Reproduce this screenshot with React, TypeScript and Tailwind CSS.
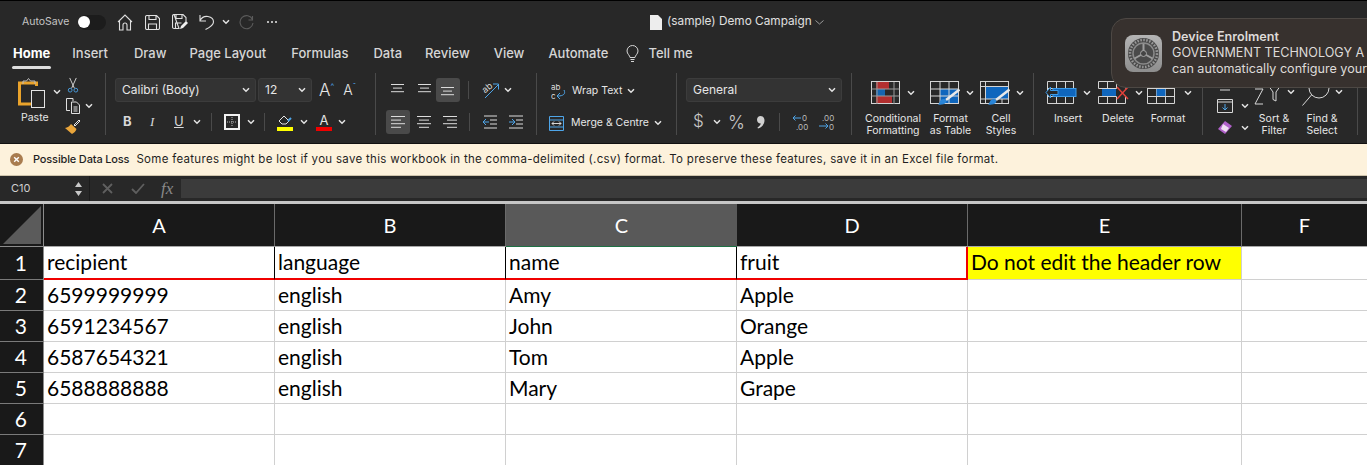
import React from "react";

const Chev = ({ className = "" }: { className?: string }) => (
  <svg width="8" height="6" viewBox="0 0 8 6" className={"shrink-0 " + className} fill="none" stroke="#e4e4e4" strokeWidth="1.5">
    <path d="M1 1.2l3 3 3-3" />
  </svg>
);

const Lines = ({ kind }: { kind: string }) => {
  const xs: Record<string, [number, number][]> = {
    top: [[1, 14], [3, 12], [1, 14]],
    left: [[1, 15], [1, 11], [1, 15], [1, 11]],
    center: [[1, 15], [3, 13], [1, 15], [3, 13]],
    right: [[1, 15], [5, 15], [1, 15], [5, 15]],
  };
  return (
    <svg width="16" height="14" viewBox="0 0 16 14" stroke="#dcdcdc" strokeWidth="1">
      {xs[kind].map((p, i) => (
        <line key={i} x1={p[0]} x2={p[1]} y1={1.5 + i * 3.6} y2={1.5 + i * 3.6} />
      ))}
    </svg>
  );
};

const TableIcon = ({ variant }: { variant: string }) => (
  <svg width="30" height="24" viewBox="0 0 30 24" fill="none">
    {variant === "cond" && (
      <>
        <rect x="5" y="1" width="13" height="7" fill="#b22f2f" />
        <rect x="5" y="8" width="9" height="7" fill="#1565b0" />
        <rect x="5" y="15" width="16" height="7" fill="#b22f2f" />
      </>
    )}
    {variant === "fmt" && <rect x="10" y="8" width="18" height="15" fill="#0f66bd" />}
    {variant === "cell" && <rect x="5" y="6" width="23" height="12" fill="#0f66bd" />}
    <g stroke="#d4d4d4" strokeWidth="1">
      <rect x="0.5" y="0.5" width="28" height="22" />
      {variant === "cond" && <path d="M6 1v22M23 1v22M0.5 8h28M0.5 15h28" stroke="#9a9a9a" />}
      {variant === "fmt" && <path d="M10 1v22M19 1v22M0.5 8h28M0.5 15h28" />}
      {variant === "cell" && <path d="M5.500 1v22M14 18v5M22 18v5M0.5 5.500h28M0.5 18h28" />}
    </g>
    {variant !== "cond" && (
      <>
        <path d="M29.500 8.500L16 19" stroke="#e8e8e8" strokeWidth="2.500" />
        <path d="M8 23.500c2-1 1.500-5.500 5.500-5.500 2.500 0 3.500 2 2.500 3.500-1.500 2-5 2.500-8 2z" fill="#2a86d8" />
      </>
    )}
  </svg>
);

const RowIcon = ({ variant }: { variant: string }) => (
  <svg width="32" height="23" viewBox="0 0 32 23" fill="none">
    <g stroke="#d4d4d4">
      {variant === "insert" && <path d="M2.500.5h26v22h-26zM2.500 7.500h26M2.500 15.500h26M11.500.5v22M20.500.5v22" />}
      {variant === "delete" && <path d="M1.500 7.500V.5h27v7M1.500 15.500v7h27v-7M10.500.5v7M19.500.5v7M10.500 15.500v7M19.500 15.500v7M1.500 7.500h18M1.500 15.500h18" />}
      {variant === "format" && <path d="M1.500.5h27v22h-27zM1.500 7.500h27M1.500 15.500h27M10.500.5v22M19.500.5v22" />}
    </g>
    {variant === "insert" && (
      <>
        <rect x="8" y="7.500" width="23" height="8" fill="#0f66bd" stroke="#3c9be8" />
        <path d="M13 9.500H5.500V6L1 11.500 5.500 17v-3.500H13z" fill="#282828" stroke="#3c9be8" />
      </>
    )}
    {variant === "delete" && (
      <>
        <rect x="5" y="8" width="14" height="7" fill="#0f66bd" />
        <path d="M20 6l11 12M31 6L20 18" stroke="#e2413a" strokeWidth="1.500" />
      </>
    )}
    {variant === "format" && <rect x="10.500" y="8" width="9" height="7" fill="#0f66bd" />}
  </svg>
);

const Big = ({ label, icon, w, iconCls = "" }: { label: React.ReactNode; icon: React.ReactNode; w: string; iconCls?: string }) => (
  <div className={"flex flex-col items-center " + w}>
    <div className={"flex h-[25px] shrink-0 items-start gap-[6px] " + iconCls}>
      {icon}
      <Chev className="mt-[9px]" />
    </div>
    <div className="mt-[7px] whitespace-nowrap text-center text-[10.500px] leading-[12px] text-[#e6e6e6]">{label}</div>
  </div>
);

const Select = ({ text, w }: { text: string; w: string }) => (
  <div className={"flex h-[24px] items-center justify-between rounded-[3px] border border-[#3c3c3c] bg-[#333333] pl-[6px] pr-[5px] text-[12px] text-[#e6e6e6] " + w}>
    <span>{text}</span>
    <Chev />
  </div>
);

const Sep = ({ className = "" }: { className?: string }) => <div className={"h-[18px] w-px bg-[#4a4a4a] " + className} />;

const tabs = [
  ["Home", "ml-[13px]"],
  ["Insert", "ml-[22px]"],
  ["Draw", "ml-[26px]"],
  ["Page Layout", "ml-[23px]"],
  ["Formulas", "ml-[25px]"],
  ["Data", "ml-[25px]"],
  ["Review", "ml-[23px]"],
  ["View", "ml-[24px]"],
  ["Automate", "ml-[24px]"],
];

const Gear = () => (
  <svg width="37" height="37" viewBox="0 0 37 37" className="shrink-0">
    <defs>
      <linearGradient id="gg" x1="0" y1="0" x2="0" y2="1">
        <stop offset="0" stopColor="#b4b4b4" />
        <stop offset="1" stopColor="#8e8e8e" />
      </linearGradient>
    </defs>
    <rect width="37" height="37" rx="8" fill="url(#gg)" />
    <circle cx="18.500" cy="18.500" r="15.500" fill="#4a4a4a" />
    <circle cx="18.500" cy="18.500" r="13.500" fill="none" stroke="#9a9a9a" strokeWidth="2.500" strokeDasharray="1.500 1.500" />
    <circle cx="18.500" cy="18.500" r="10.500" fill="none" stroke="#8a8a8a" strokeWidth="1.500" />
    <path d="M18.500 18.500V8.500M18.500 18.500l9 5M18.500 18.500l-9 5" stroke="#9c9c9c" strokeWidth="2" />
    <circle cx="18.500" cy="18.500" r="3" fill="#444" stroke="#a5a5a5" />
  </svg>
);

const cols = ["A", "B", "C", "D", "E", "F"];
const rows = [
  ["recipient", "language", "name", "fruit", "Do not edit the header row", ""],
  ["6599999999", "english", "Amy", "Apple", "", ""],
  ["6591234567", "english", "John", "Orange", "", ""],
  ["6587654321", "english", "Tom", "Apple", "", ""],
  ["6588888888", "english", "Mary", "Grape", "", ""],
  ["", "", "", "", "", ""],
  ["", "", "", "", "", ""],
];

const headerCell = [
  "border-b-2 border-r border-b-[#f00000] border-r-black leading-[29px]",
  "border-b-2 border-r border-b-[#f00000] border-r-black leading-[29px]",
  "border-b-2 border-r border-b-[#f00000] border-r-black leading-[29px]",
  "border-b-2 border-r-2 border-b-[#f00000] border-r-[#f00000] leading-[29px]",
  "border-b border-r border-b-[#d0d0d0] border-r-[#d0d0d0] bg-[#ffff00] pl-[2px] leading-[30px]",
  "border-b border-b-[#d0d0d0] leading-[30px]",
];

function cellClass(r: number, c: number) {
  const base = "truncate whitespace-nowrap pl-[3px] text-[21px] text-black ";
  if (r === 0) return base + headerCell[c];
  return base + "border-b border-b-[#d0d0d0] leading-[30px] " + (c < 5 ? "border-r border-r-[#d0d0d0]" : "");
}

export default function App() {
  return (
    <div className="relative h-[465px] w-[1367px] overflow-hidden bg-white font-['Inter',sans-serif]">
      {/* Ribbon */}
      <div className="h-[144px] border-y border-black border-b-[#111111] bg-[#282828]">
        <div className="relative flex h-[42px] items-center text-[#d8d8d8]">
          <span className="ml-[22px] w-[50px] whitespace-nowrap text-[10.500px] text-[#c4c4c4]">AutoSave</span>
          <div className="ml-[6px] flex h-[15px] w-[28px] items-center rounded-full bg-[#1c1c1c]">
            <div className="h-[12px] w-[12px] rounded-full bg-white" />
          </div>
          <svg className="ml-[11px]" width="16" height="17" viewBox="0 0 16 17" fill="none" stroke="#e0e0e0" strokeWidth="1.100">
            <path d="M1 8l7-7 7 7M2.500 7v9h3.500v-5a2 2 0 0 1 4 0v5h3.500V7" />
          </svg>
          <svg className="ml-[12px]" width="15" height="15" viewBox="0 0 15 15" fill="none" stroke="#e0e0e0" strokeWidth="1.100">
            <path d="M2 .5h9.500l3 3V13a1.500 1.500 0 0 1-1.500 1.500H2A1.500 1.500 0 0 1 .5 13V2A1.500 1.500 0 0 1 2 .5zM4 .5v4h7v-4M3.500 14.500V9h8v5.500" />
          </svg>
          <svg className="ml-[12px]" width="16" height="16" viewBox="0 0 16 16" fill="none" stroke="#e0e0e0" strokeWidth="1.100">
            <path d="M2 .5h9l3 3v4M7 14.500H2A1.500 1.500 0 0 1 .5 13V2A1.500 1.500 0 0 1 2 .5zM4 .5v4h6v-4M3.500 14V9h6" />
            <path d="M8 15l1-3 5-5 2 2-5 5z" fill="#f0f0f0" stroke="none" />
          </svg>
          <svg className="ml-[11px]" width="16" height="16" viewBox="0 0 16 16" fill="none" stroke="#e0e0e0" strokeWidth="1.100">
            <path d="M1 1v6h6M1 6.500C3 3 6 2 9 2.500c3.500.6 5.500 3 5.500 5.500 0 3-3 5-8 7.500" />
          </svg>
          <Chev className="ml-[7px]" />
          <svg className="ml-[9px]" width="15" height="15" viewBox="0 0 15 15" fill="none" stroke="#5c5c5c" strokeWidth="1.100">
            <path d="M13.500 1v4h-4M13.500 4.500A6.500 6.500 0 1 0 14 8" />
          </svg>
          <div className="ml-[13px] flex gap-[2px]">
            <i className="h-[2px] w-[2px] rounded-full bg-[#e8e8e8]" />
            <i className="h-[2px] w-[2px] rounded-full bg-[#e8e8e8]" />
            <i className="h-[2px] w-[2px] rounded-full bg-[#e8e8e8]" />
          </div>
          <div className="ml-[373px] flex items-center text-[11.800px] text-[#e0e0e0]">
            <svg width="12" height="15" viewBox="0 0 12 15"><path d="M0 0h8l4 4v11H0z" fill="#ededed" /></svg>
            <span className="ml-[5px]">(sample) Demo Campaign</span>
            <svg className="ml-[3px]" width="9" height="5" viewBox="0 0 9 5" fill="none" stroke="#9a9a9a"><path d="M.5.500l4 3.500 4-3.500" /></svg>
          </div>
        </div>
        {/* Tabs */}
        <div className="mb-[8px] flex h-[22px] items-center text-[13px] font-medium text-[#d6d6d6]">
          {tabs.map(([t, m], i) => (
            <span key={t} className={"relative " + m + (i === 0 ? " font-bold text-white" : "")}>
              {t}
              {i === 0 && <span className="absolute -bottom-[5px] -left-px -right-px h-[2.500px] rounded bg-[#dddddd]" />}
            </span>
          ))}
          <svg className="ml-[18px]" width="13" height="18" viewBox="0 0 13 18" fill="none" stroke="#d6d6d6">
            <path d="M4 12.500c0-2-3-3.500-3-6.500a5.500 5.500 0 0 1 11 0c0 3-3 4.500-3 6.500zM4.500 14.500h4M5 16.500h3" />
          </svg>
          <span className="ml-[9px]">Tell me</span>
        </div>
        {/* Groups */}
        <div className="flex h-[62px] text-[#e6e6e6]">
          <div className="flex w-[106px] border-r border-[#4a4a4a] pl-[18px]">
            <div className="flex w-[35px] flex-col items-start pt-[5px]">
              <svg className="shrink-0" width="28" height="30" viewBox="0 0 28 30" fill="none">
                <path d="M18.500 8V5H1.500v21H13" stroke="#eaa32b" strokeWidth="3" />
                <path d="M5 6V3h3.500l2-2.500 2 2.500H17v3" stroke="#bdbdbd" />
                <rect x="13.500" y="12.500" width="13" height="17" stroke="#e4e4e4" />
              </svg>
              <span className="ml-[3px] mt-[4px] text-[10.500px] leading-[12px]">Paste</span>
            </div>
            <Chev className="mt-[16px]" />
            <div className="ml-[3px] flex flex-col items-center pt-[4px]">
              <svg className="shrink-0" width="12" height="16" viewBox="0 0 12 17" fill="none">
                <path d="M2.500 1l5 11M9.500 1l-5 11" stroke="#d8d8d8" />
                <circle cx="3" cy="14" r="2" stroke="#4a9ee0" />
                <circle cx="9" cy="14" r="2" stroke="#4a9ee0" />
              </svg>
              <svg className="mt-[5px] shrink-0" width="16" height="16" viewBox="0 0 16 16" fill="none" stroke="#e0e0e0">
                <path d="M8 3V.5H1.500v12H5M6.500 4h5l3 3v8.500h-8zM8.500 9h4M8.500 11h4M8.500 13h4" />
              </svg>
              <svg className="mt-[5px] shrink-0" width="17" height="16" viewBox="0 0 17 16" fill="none">
                <path d="M1 9l7 6c2-1 4-3 4.500-5L7 5C5.500 7.500 3.500 8.500 1 9z" fill="#e9a53b" />
                <path d="M10 6l5-5 1 1-5 5z" stroke="#e4e4e4" />
              </svg>
            </div>
            <Chev className="ml-[4px] mt-[30px]" />
          </div>

          <div className="flex w-[270px] flex-col border-r border-[#4a4a4a] pl-[9px] pt-[5px]">
            <div className="flex items-center">
              <Select text="Calibri (Body)" w="w-[141px]" />
              <Select text="12" w="ml-[2px] w-[54px]" />
              <span className="ml-[7px] text-[17px] font-light leading-none">A</span>
              <span className="mb-[8px] text-[8px] text-[#4ea5e8]">^</span>
              <span className="ml-[9px] text-[14px] font-light leading-none">A</span>
              <span className="mb-[8px] text-[8px] text-[#4ea5e8]">ˇ</span>
            </div>
            <div className="mt-[8px] flex h-[24px] items-center pl-[8px] text-[13px] text-[#d8d8d8]">
              <span className="w-[9px] font-bold">B</span>
              <span className="ml-[18px] w-[8px] font-['Liberation_Serif',serif] italic">I</span>
              <span className="ml-[16px] w-[10px] underline">U</span>
              <Chev className="ml-[9px]" />
              <Sep className="ml-[10px]" />
              <svg className="ml-[12px]" width="16" height="16" viewBox="0 0 16 16" fill="none">
                <rect x="1" y="1" width="14" height="14" stroke="#f2f2f2" strokeWidth="2" />
                <path d="M8 3v10M3 8h10" stroke="#bbb" strokeDasharray="1 1" />
              </svg>
              <Chev className="ml-[7px]" />
              <Sep className="ml-[9px]" />
              <div className="ml-[12px] flex w-[16px] flex-col items-center">
                <svg width="16" height="12" viewBox="0 0 16 12" fill="none">
                  <path d="M2 7l5-5 5 5-3 3H5z" stroke="#e4e4e4" />
                  <path d="M11 7l3-3" stroke="#4ea5e8" strokeWidth="2" />
                </svg>
                <div className="mt-[1px] h-[4px] w-[16px] bg-[#ffff00]" />
              </div>
              <Chev className="ml-[7px]" />
              <div className="ml-[8px] flex w-[16px] flex-col items-center">
                <span className="text-[13px] font-normal leading-[12px] text-[#e4e4e4]">A</span>
                <div className="mt-[1px] h-[4px] w-[16px] bg-[#f00000]" />
              </div>
              <Chev className="ml-[6px]" />
            </div>
          </div>

          <div className="flex w-[161px] flex-col border-r border-[#4a4a4a] pt-[5px]">
            <div className="flex h-[24px] items-center pl-[14px]">
              <Lines kind="top" />
              <div className="ml-[11px]"><Lines kind="top" /></div>
              <div className="ml-[3px] flex h-[24px] w-[24px] items-center justify-center rounded-[3px] bg-[#4a4a4a] pt-[6px]"><Lines kind="top" /></div>
              <Sep className="ml-[8px]" />
              <svg className="ml-[10px]" width="22" height="22" viewBox="0 0 22 22" fill="none">
                <text x="3" y="12" fontSize="9" fill="#ddd" transform="rotate(-40 8 9)" fontFamily="Inter">ab</text>
                <path d="M6 19L19 6M14 5h5.500v5.500" stroke="#4ea5e8" />
              </svg>
              <Chev className="ml-[3px]" />
            </div>
            <div className="mt-[8px] flex h-[24px] items-center pl-[10px]">
              <div className="flex h-[24px] w-[24px] items-center justify-center rounded-[3px] bg-[#4a4a4a]"><Lines kind="left" /></div>
              <div className="ml-[6px]"><Lines kind="center" /></div>
              <div className="ml-[10px]"><Lines kind="right" /></div>
              <Sep className="ml-[11px]" />
              <svg className="ml-[12px]" width="16" height="14" viewBox="0 0 16 14" fill="none">
                <path d="M2 1h13M8 5h7M8 9h7M2 13h13" stroke="#dcdcdc" />
                <path d="M7 7H1M4 4L1 7l3 3" stroke="#4ea5e8" />
              </svg>
              <svg className="ml-[10px]" width="16" height="14" viewBox="0 0 16 14" fill="none">
                <path d="M1 1h14M8 5h7M8 9h7M1 13h14" stroke="#dcdcdc" />
                <path d="M1 7h6M4 4l3 3-3 3" stroke="#4ea5e8" />
              </svg>
            </div>
          </div>

          <div className="flex w-[140px] flex-col border-r border-[#4a4a4a] pl-[12px] pt-[6px] text-[10.500px]">
            <div className="flex h-[24px] items-center">
              <svg className="ml-[2px]" width="16" height="18" viewBox="0 0 16 18" fill="none">
                <text x="0" y="8" fontSize="8" fill="#ddd" fontFamily="Inter">ab</text>
                <text x="0" y="17" fontSize="8" fill="#ddd" fontFamily="Inter">c</text>
                <path d="M13 8c2 4-1 6-6 6M9 11l-3 3 3 3" stroke="#4ea5e8" />
              </svg>
              <span className="ml-[5px] whitespace-nowrap">Wrap Text</span>
              <Chev className="ml-[5px]" />
            </div>
            <div className="mt-[8px] flex h-[24px] items-center">
              <svg width="15" height="15" viewBox="0 0 15 15" fill="none">
                <path d="M.5.500h14v14H.5zM.5 4h14M.5 11h14" stroke="#4ea5e8" />
                <path d="M3 7.500h9M5 5.500l-2 2 2 2M10 5.500l2 2-2 2" stroke="#d8d8d8" />
              </svg>
              <span className="ml-[7px] whitespace-nowrap">Merge &amp; Centre</span>
              <Chev className="ml-[5px]" />
            </div>
          </div>

          <div className="flex w-[175px] flex-col border-r border-[#4a4a4a] pl-[9px] pt-[5px]">
            <Select text="General" w="w-[156px]" />
            <div className="mt-[8px] flex h-[24px] items-center text-[#c8c8c8]">
              <span className="ml-[7px] w-[10px] text-[17px] font-light">$</span>
              <Chev className="ml-[10px]" />
              <span className="ml-[7px] w-[20px] text-[18px] font-light">%</span>
              <svg className="ml-[8px]" width="9" height="14" viewBox="0 0 9 14" fill="#d0d0d0">
                <path d="M4.500 1C7 1 8.500 3 8.500 5.500 8.500 9 6 12 2 13.500L1.500 12.500C3.500 11 4.500 10 4.800 8.500 2.500 8.500 1 7 1 4.800 1 2.600 2.500 1 4.500 1z" />
              </svg>
              <Sep className="ml-[14px]" />
              <svg className="ml-[12px]" width="18" height="18" viewBox="0 0 18 18" fill="none">
                <text x="10" y="8" fontSize="8" fill="#bbb" fontFamily="Inter">0</text>
                <text x="4" y="17" fontSize="8" fill="#bbb" fontFamily="Inter">.00</text>
                <path d="M9 5H1M3.500 2.500L1 5l2.500 2.500" stroke="#4ea5e8" />
              </svg>
              <svg className="ml-[8px]" width="18" height="18" viewBox="0 0 18 18" fill="none">
                <text x="4" y="8" fontSize="8" fill="#bbb" fontFamily="Inter">.00</text>
                <text x="11" y="17" fontSize="8" fill="#bbb" fontFamily="Inter">0</text>
                <path d="M1 13h9M7.500 10.500L10 13l-2.500 2.500" stroke="#4ea5e8" />
              </svg>
            </div>
          </div>

          <div className="flex w-[182px] border-r border-[#4a4a4a] pl-[9px] pt-[8px]">
            <Big w="w-[64px]" icon={<TableIcon variant="cond" />} label={<>Conditional<br />Formatting</>} />
            <Big w="w-[51px]" iconCls="ml-[2px]" icon={<TableIcon variant="fmt" />} label={<>Format<br />as Table</>} />
            <Big w="w-[50px]" iconCls="ml-[2px]" icon={<TableIcon variant="cell" />} label={<>Cell<br />Styles</>} />
          </div>

          <div className="flex w-[169px] border-r border-[#4a4a4a] pl-[9px] pt-[8px]">
            <Big w="w-[50px]" icon={<RowIcon variant="insert" />} label="Insert" />
            <Big w="w-[50px]" iconCls="ml-[4px]" icon={<RowIcon variant="delete" />} label="Delete" />
            <Big w="w-[50px]" iconCls="ml-[2px]" icon={<RowIcon variant="format" />} label="Format" />
          </div>

          <div className="flex w-[155px] border-r border-[#4a4a4a] pl-[14px] pt-[4px]">
            <div className="flex flex-col pt-[8px]">
              <svg className="ml-[2px] shrink-0" width="12" height="6" viewBox="0 0 12 6" stroke="#d8d8d8" fill="none"><path d="M1 5h10" /></svg>
              <div className="mt-[8px] flex items-center gap-[8px]">
                <svg className="shrink-0" width="16" height="14" viewBox="0 0 16 14" fill="none">
                  <path d="M.5.500h15v13H.5zM.5 3h15" stroke="#d8d8d8" />
                  <path d="M8 5v6M5.500 8.500L8 11l2.500-2.500" stroke="#4ea5e8" />
                </svg>
                <Chev />
              </div>
              <div className="mt-[7px] flex items-center gap-[8px]">
                <svg className="shrink-0" width="16" height="15" viewBox="0 0 16 15">
                  <path d="M1 9l7-8 7 5-7 8z" fill="#b061c9" />
                  <path d="M6 4l6 4-3 4-5-3z" fill="#f0dff2" />
                </svg>
                <Chev />
              </div>
            </div>
            <div className="ml-[1px] flex w-[48px] flex-col items-center">
              <div className="flex h-[32px] shrink-0 items-end gap-[5px] pb-[3px]">
                <svg width="28" height="22" viewBox="0 0 28 22" fill="none" stroke="#d8d8d8">
                  <path d="M1 5h8l-8 15h8M14 1h13l-5 7v9l-3-1.500V8z" />
                </svg>
                <Chev className="mb-[11px]" />
              </div>
              <div className="mt-[4px] whitespace-nowrap text-center text-[10.500px] leading-[12px]">Sort &amp;<br />Filter</div>
            </div>
            <div className="flex w-[48px] flex-col items-center">
              <div className="flex h-[32px] shrink-0 items-end gap-[5px] pb-[3px]">
                <svg width="28" height="26" viewBox="0 0 28 26" fill="none" stroke="#d8d8d8">
                  <circle cx="17" cy="8" r="10" />
                  <path d="M9.500 15L.5 25.500" />
                </svg>
                <Chev className="mb-[11px]" />
              </div>
              <div className="mt-[4px] whitespace-nowrap text-center text-[10.500px] leading-[12px]">Find &amp;<br />Select</div>
            </div>
          </div>
        </div>
      </div>

      {/* Notification */}
      <div className="absolute left-[1111px] top-[18px] flex h-[70px] w-[280px] items-center rounded-[15px] border border-[#4d4844] bg-[#37312e] pl-[13px]">
        <Gear />
        <div className="ml-[10px] whitespace-nowrap text-[12.600px] leading-[16px] text-[#dedbd9]">
          <div className="font-semibold">Device Enrolment</div>
          <div>GOVERNMENT TECHNOLOGY A</div>
          <div>can automatically configure your</div>
        </div>
      </div>

      {/* Warning */}
      <div className="flex h-[32px] items-center border-b border-[#cfc4ac] bg-[#fdf2dc] pl-[10px] text-[11px] text-[#1f1f1f]">
        <svg width="13" height="13" viewBox="0 0 13 13" fill="none">
          <circle cx="6.500" cy="6.500" r="6.500" fill="#a97c4f" />
          <path d="M4.200 4.200l4.600 4.600M8.800 4.200L4.200 8.800" stroke="#fff" strokeWidth="1.400" />
        </svg>
        <span className="ml-[10px] font-medium tracking-[-0.15px]">Possible Data Loss</span>
        <span className="ml-[7px] text-[11.500px] tracking-[0.3px]">Some features might be lost if you save this workbook in the comma-delimited (.csv) format. To preserve these features, save it in an Excel file format.</span>
      </div>

      {/* Formula bar */}
      <div className="flex h-[25px] items-center bg-[#282828] text-[#cfcfcf]">
        <span className="ml-[11px] w-[63px] text-[11px]">C10</span>
        <svg width="9" height="14" viewBox="0 0 9 14" fill="#c8c8c8"><path d="M4.500 0L8 5H1zM4.500 14L1 9h7z" /></svg>
        <div className="ml-[6px] h-[25px] w-px bg-[#1c1c1c]" />
        <svg className="ml-[12px]" width="11" height="11" viewBox="0 0 11 11" stroke="#5f5f5f" strokeWidth="1.800"><path d="M1 1l9 9M10 1l-9 9" /></svg>
        <svg className="ml-[18px]" width="14" height="11" viewBox="0 0 14 11" fill="none" stroke="#5f5f5f" strokeWidth="1.800"><path d="M1 6l4 4 8-9" /></svg>
        <span className="ml-[16px] font-['Liberation_Serif',serif] text-[17px] italic text-[#8a8a8a]">fx</span>
        <div className="ml-[8px] h-[19px] flex-1 bg-[#3b3b3b]" />
      </div>

      {/* Sheet */}
      <div className="border-t-[3px] border-[#c6c6c6] font-['Lato',sans-serif]">
        <div className="grid grid-cols-[44px_231px_231px_231px_231px_274px_125px] grid-rows-[43px_33px_31px_31px_31px_31px_31px_31px]">
          <div className="flex items-end justify-end border-r border-b border-[#8c8c8c] bg-[#191919] p-[2px]">
            <svg width="38" height="38" viewBox="0 0 38 38"><path d="M38 0v38H0z" fill="#5b5b5b" /></svg>
          </div>
          {cols.map((c) => (
            <div
              key={c}
              className={
                "flex items-center justify-center border-b text-[20px] text-white " +
                (c === "C" ? "border-b-[#1e7145] bg-[#595959] " : "border-b-[#a8a8a8] bg-[#191919] ") +
                (c === "C" || c === "F" ? "" : "border-r border-r-[#6a6a6a]")
              }
            >
              {c}
            </div>
          ))}
          {rows.map((r, i) => (
            <React.Fragment key={i}>
              <div className="flex items-center justify-end border-b border-b-[#7a7a7a] border-r border-r-[#8c8c8c] bg-[#191919] pr-[16px] text-[21px] text-white">
                {i + 1}
              </div>
              {r.map((v, j) => (
                <div key={j} className={cellClass(i, j)}>
                  {v}
                </div>
              ))}
            </React.Fragment>
          ))}
        </div>
      </div>
    </div>
  );
}
